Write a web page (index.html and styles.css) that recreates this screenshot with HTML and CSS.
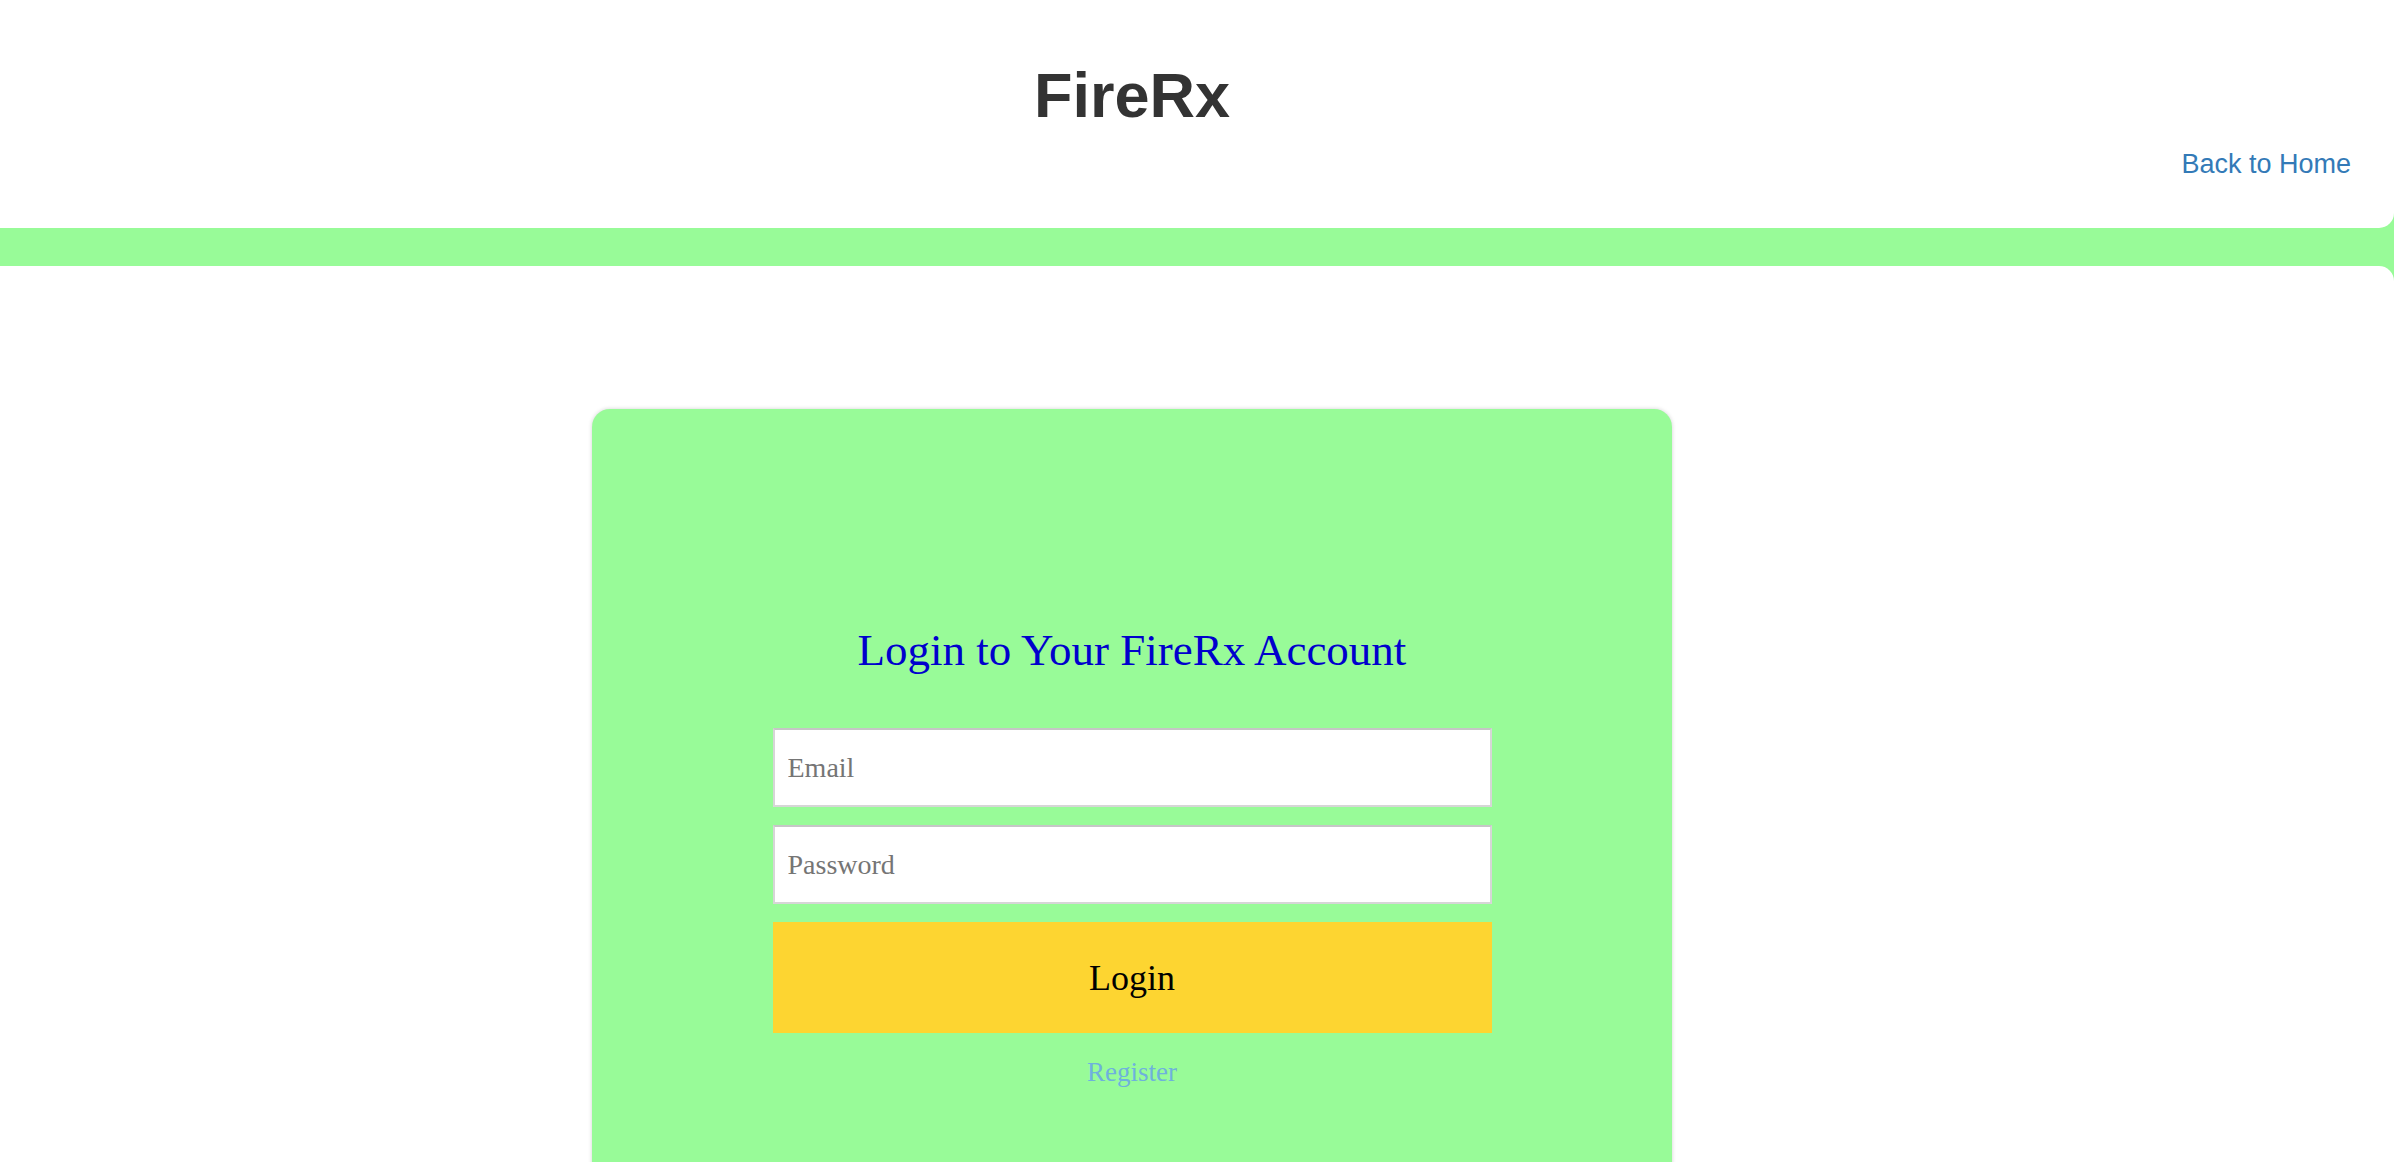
FILE: index.html
```html
<!DOCTYPE html>
<html>
<head>
<meta charset="utf-8">
<title>FireRx</title>
<link rel="stylesheet" href="styles.css">
</head>
<body>
<header class="site-header">
  <h1 class="brand">FireRx</h1>
  <div class="header-links"><a class="home-link" href="#">Back to Home</a></div>
</header>
<main class="main">
  <section class="card">
    <h2 class="card-title">Login to Your FireRx Account</h2>
    <form class="login-form">
      <input class="field" type="email" placeholder="Email">
      <input class="field" type="password" placeholder="Password">
      <button class="login-btn" type="button">Login</button>
      <a class="register-link" href="#">Register</a>
    </form>
  </section>
</main>
</body>
</html>
```
FILE: styles.css
```css
html, body {
  margin: 0;
  padding: 0;
}
body {
  background: #98fb98;
  font-family: "Liberation Serif", "Times New Roman", serif;
  height: 1162px;
  overflow: hidden;
}
.site-header {
  background: #ffffff;
  height: 228px;
  box-sizing: border-box;
  padding-top: 64px;
  border-bottom-right-radius: 15px;
}
.brand {
  margin: 0 130px 0 0;
  text-align: center;
  font-family: "Liberation Sans", Arial, sans-serif;
  font-weight: bold;
  font-size: 63px;
  line-height: 1;
  color: #333333;
}
.header-links {
  display: flex;
  justify-content: flex-end;
  padding-right: 43px;
  margin-top: 24px;
}
.home-link {
  font-family: "Liberation Sans", Arial, sans-serif;
  font-size: 27px;
  line-height: 1;
  color: #337ab7;
  text-decoration: none;
}
.main {
  margin-top: 38px;
  background: #ffffff;
  border-top-right-radius: 15px;
  padding-top: 143px;
  padding-right: 130px;
  min-height: 1000px;
  display: flex;
  justify-content: center;
}
.card {
  width: 1080px;
  min-height: 900px;
  background: #98fb98;
  border-radius: 18px;
  box-shadow: 0 0 4px rgba(0, 0, 0, 0.18);
  padding-top: 219px;
  box-sizing: border-box;
  display: flex;
  flex-direction: column;
  align-items: center;
}
.card-title {
  margin: 0;
  text-align: center;
  font-weight: normal;
  font-size: 45px;
  line-height: 1;
  color: #0000cd;
}
.login-form {
  width: 719px;
  margin-top: 55px;
  display: flex;
  flex-direction: column;
  gap: 18px;
}
.field {
  height: 79px;
  box-sizing: border-box;
  border: 2px solid #d6d6d6;
  border-top-color: #c6c6c6;
  background: #ffffff;
  padding: 0 13px;
  font-family: "Liberation Serif", "Times New Roman", serif;
  font-size: 28px;
  color: #333;
  outline: none;
}
.field::placeholder {
  color: #757575;
}
.login-btn {
  height: 111px;
  border: none;
  background: #fdd531;
  font-family: "Liberation Serif", "Times New Roman", serif;
  font-size: 36px;
  color: #000000;
  padding: 0;
}
.register-link {
  margin-top: 8px;
  align-self: center;
  font-size: 27px;
  line-height: 1;
  color: #6eb1dd;
  text-decoration: none;
}
```
